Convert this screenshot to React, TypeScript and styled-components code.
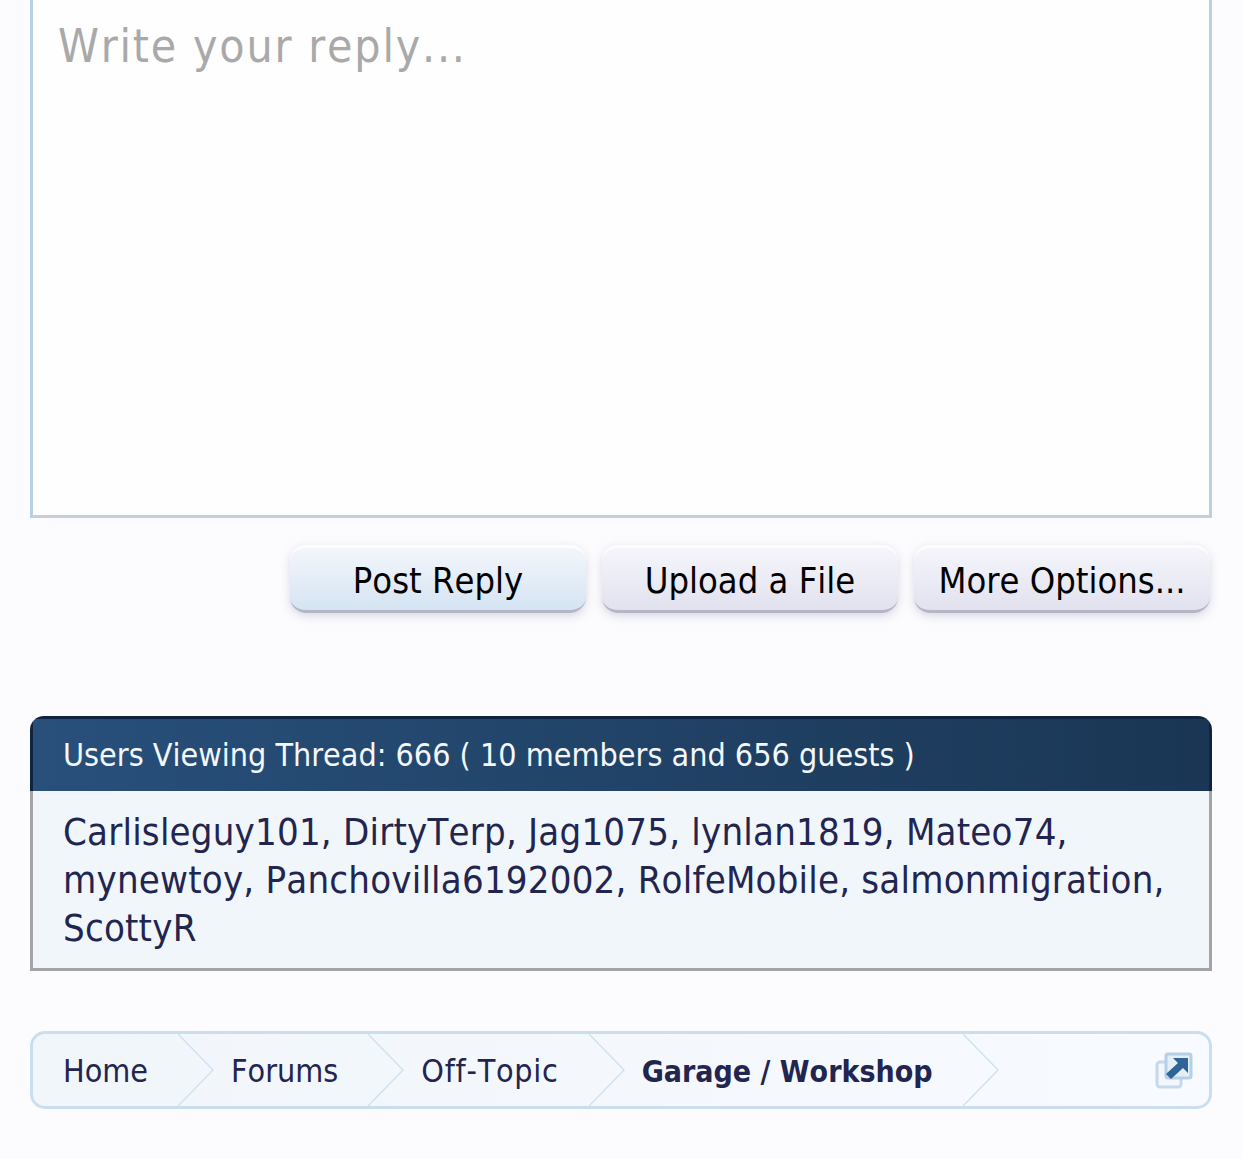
import React from 'react'
import styled, { createGlobalStyle } from 'styled-components'

const GlobalStyle = createGlobalStyle`
  html, body {
    margin: 0;
    padding: 0;
    background: #fcfcff;
    overflow: hidden;
  }
  body {
    font-family: "DejaVu Sans Condensed", "DejaVu Sans", sans-serif;
    font-stretch: condensed;
    font-kerning: none;
    font-variant-ligatures: none;
  }
`

const Page = styled.div`
  width: 1242px;
  height: 1159px;
  box-sizing: border-box;
  padding: 0 30px;
  overflow: hidden;
`

const ReplyBox = styled.textarea`
  display: block;
  box-sizing: border-box;
  width: 1182px;
  height: 558px;
  margin: -40px 0 0;
  padding: 56px 25px 0;
  border: 3px solid #b9cfe2;
  border-bottom-color: #c3d0dc;
  border-radius: 0;
  background: #fefeff;
  font: inherit;
  font-size: 46px;
  line-height: 54px;
  letter-spacing: 1.8px;
  resize: none;
  outline: none;
  &::placeholder {
    color: #a9a9a9;
    opacity: 1;
  }
`

const ButtonRow = styled.div`
  display: flex;
  justify-content: flex-end;
  gap: 16px;
  margin: 27px 2px 0 0;
`

const Button = styled.button<{ $primary?: boolean }>`
  width: 296px;
  height: 68px;
  box-sizing: border-box;
  padding: 2px 0 0;
  border: 0;
  border-top: 3px solid #fdfdff;
  border-bottom: 3px solid #b5b5c6;
  border-radius: 16px;
  background: ${p => p.$primary
    ? 'linear-gradient(#f3f6fb, #d5e4f3)'
    : 'linear-gradient(#f5f5fb, #e2e2ef)'};
  box-shadow: 0 3px 10px rgba(120, 120, 150, 0.28);
  color: #000;
  font: inherit;
  font-size: 36px;
`

const Panel = styled.section`
  margin-top: 103px;
  border-radius: 14px 14px 0 0;
  overflow: hidden;
`

const PanelHeader = styled.h3`
  margin: 0;
  height: 75px;
  box-sizing: border-box;
  padding: 0 30px;
  display: flex;
  align-items: center;
  border-top: 3px solid #10243f;
  border-left: 3px solid #10243f;
  border-right: 3px solid #10243f;
  background: linear-gradient(90deg, #28507b, #1a3654);
  color: #f4f7fb;
  font-size: 32px;
  font-weight: normal;
  white-space: pre;
`

const PanelBody = styled.div`
  box-sizing: border-box;
  padding: 17px 30px 16px;
  border: 3px solid #a3a3a8;
  border-top: 0;
  background: #f1f6fb;
  color: #22254f;
  font-size: 38px;
  line-height: 48px;
  letter-spacing: 0.2px;
`

const Breadcrumb = styled.nav`
  margin-top: 60px;
  height: 78px;
  box-sizing: border-box;
  display: flex;
  align-items: stretch;
  border: 3px solid #c9dff0;
  border-radius: 15px;
  background: linear-gradient(90deg, #f1f6fb, #f7fafe);
  color: #22254f;
`

const Crumb = styled.a<{ $first?: boolean; $current?: boolean; $tracking?: number }>`
  display: flex;
  align-items: center;
  padding: 2px 30px 0 ${p => (p.$first ? 30 : 17)}px;
  font-weight: ${p => (p.$current ? 'bold' : 'normal')};
  font-size: ${p => (p.$current ? 30 : 32)}px;
  letter-spacing: ${p => p.$tracking ?? 0}px;
`

const ChevronSvg = styled.svg`
  width: 36px;
  height: 72px;
  flex: none;
`

const PopIcon = styled.svg`
  width: 38px;
  height: 38px;
  margin: auto 16px auto auto;
`

const Chevron = () => (
  <ChevronSvg viewBox="0 0 36 72">
    <path d="M0 0 L35 36 L0 72" fill="none" stroke="#cfe2f2" strokeWidth="1.5" />
  </ChevronSvg>
)

const crumbs = [
  { label: 'Home' },
  { label: 'Forums' },
  { label: 'Off-Topic', tracking: 0.75 },
  { label: 'Garage / Workshop' },
]

export default function App() {
  return (
    <Page>
      <GlobalStyle />
      <ReplyBox placeholder="Write your reply..." />
      <ButtonRow>
        <Button $primary>Post Reply</Button>
        <Button>Upload a File</Button>
        <Button>More Options...</Button>
      </ButtonRow>
      <Panel>
        <PanelHeader>Users Viewing Thread: 666 ( 10 members and 656 guests )</PanelHeader>
        <PanelBody>
          Carlisleguy101, DirtyTerp, Jag1075, lynlan1819, Mateo74, mynewtoy, Panchovilla6192002,
          RolfeMobile, salmonmigration, ScottyR
        </PanelBody>
      </Panel>
      <Breadcrumb>
        {crumbs.map((c, i) => (
          <React.Fragment key={c.label}>
            <Crumb $first={i === 0} $current={i === crumbs.length - 1} $tracking={c.tracking}>
              {c.label}
            </Crumb>
            <Chevron />
          </React.Fragment>
        ))}
        <PopIcon viewBox="0 0 38 38">
          <rect x="2" y="11" width="24" height="25" rx="3" fill="#f3f7fb" stroke="#c3d9ec" strokeWidth="3" />
          <rect x="11" y="3" width="25" height="24" rx="2" fill="#e4eef7" stroke="#b5cfe5" strokeWidth="3" />
          <path d="M18 7 H33 V22 L28 17 L16 28 L11 23 L23 12 Z" fill="#2f6496" />
        </PopIcon>
      </Breadcrumb>
    </Page>
  )
}
